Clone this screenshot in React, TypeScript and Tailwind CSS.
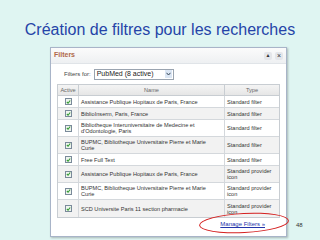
import React from 'react';

const rows = [
    { name: ['Assistance Publique Hopitaux de Paris, France'], type: ['Standard filter'] },
    { name: ['BiblioInserm, Paris, France'], type: ['Standard filter'] },
    { name: ['Bibliotheque Interuniversitaire de Medecine et', "d'Odontologie, Paris"], type: ['Standard filter'] },
    { name: ['BUPMC, Bibliotheque Universitaire Pierre et Marie', 'Curie'], type: ['Standard filter'] },
    { name: ['Free Full Text'], type: ['Standard filter'] },
    { name: ['Assistance Publique Hopitaux de Paris, France'], type: ['Standard provider', 'icon'] },
    { name: ['BUPMC, Bibliotheque Universitaire Pierre et Marie', 'Curie'], type: ['Standard provider', 'icon'] },
    { name: ['SCD Universite Paris 11 section pharmacie'], type: ['Standard provider', 'icon'] },
];

function Check() {
    return (
        <div className="w-[7px] h-[7px] border border-[#7a8a9a] bg-[#eef4ee] flex items-center justify-center">
            <svg width="6" height="6" viewBox="0 0 6 6">
                <path d="M1 3 L2.5 4.5 L5 1.2" stroke="#2f9a2f" strokeWidth="1.3" fill="none" />
            </svg>
        </div>
    );
}

export default function App() {
    return (
        <div className="relative w-[320px] h-[240px] bg-[#dff5f2] overflow-hidden" style={{ fontFamily: '"Liberation Sans", Arial, sans-serif' }}>
            <div className="pt-[21px] h-[47px] text-center text-[16px] leading-[18px] text-[#2544a8]">
                Création de filtres pour les recherches
            </div>
            <div className="ml-[50px] w-[237px] h-[190px] bg-white border border-[#a8b4c8] shadow-[1px_1px_2px_rgba(0,0,0,0.25)] flex flex-col">
                <div className="h-[16px] shrink-0 flex items-center justify-between px-[3px] bg-gradient-to-b from-[#fbfbfb] to-[#eef0f2] border-b border-[#e0e4e8]">
                    <span className="text-[7px] font-bold text-[#b0684a]">Filters</span>
                    <div className="flex gap-[3px]">
                        <div className="w-[8px] h-[8px] rounded-[2px] bg-[#e4e6ea] flex items-center justify-center text-[5px] text-[#333]">▲</div>
                        <div className="w-[8px] h-[8px] rounded-[2px] bg-[#e4e6ea] flex items-center justify-center text-[7px] leading-none text-[#333]">×</div>
                    </div>
                </div>
                <div className="h-[20px] shrink-0 flex items-center pl-[13px] gap-[3px]">
                    <span className="text-[6px] text-[#444]">Filters for:</span>
                    <div className="w-[80px] h-[11px] border border-[#9aa4b0] flex items-center justify-between pl-[2px] pr-[1px]">
                        <span className="text-[7px] text-[#222]">PubMed (8 active)</span>
                        <div className="w-[7px] h-[8px] bg-[#dbe6f4] flex items-center justify-center">
                            <svg width="5" height="4" viewBox="0 0 5 4"><path d="M0.5 0.8 L2.5 3 L4.5 0.8" stroke="#345" strokeWidth="1" fill="none" /></svg>
                        </div>
                    </div>
                </div>
                <div className="mx-[6px] shrink-0 border border-[#c8cdd2] text-[5.6px] leading-[6px] text-[#333]">
                    <div className="h-[11px] flex bg-gradient-to-b from-[#f4f4f4] to-[#e6e6e6] border-b border-[#c8cdd2] text-[#666]">
                        <div className="w-[21px] border-r border-[#c8cdd2] flex items-center justify-center">Active</div>
                        <div className="w-[146px] border-r border-[#c8cdd2] flex items-center justify-center">Name</div>
                        <div className="flex-1 flex items-center justify-center">Type</div>
                    </div>
                    {rows.map((r, i) => {
                        const tall = r.name.length > 1 || r.type.length > 1;
                        return (
                            <div key={i} className={`flex overflow-hidden border-b border-[#d4d8dc] last:border-b-0 ${tall ? 'h-[17px]' : 'h-[12px]'} ${i % 2 === 1 ? 'bg-[#f2f2f2]' : 'bg-white'}`}>
                                <div className="w-[21px] border-r border-[#d4d8dc] flex items-center justify-center"><Check /></div>
                                <div className="w-[146px] border-r border-[#d4d8dc] flex flex-col justify-center pl-[2px]">
                                    {r.name.map((t, j) => <div key={j}>{t}</div>)}
                                </div>
                                <div className="flex-1 flex flex-col justify-center pl-[2px]">
                                    {r.type.map((t, j) => <div key={j}>{t}</div>)}
                                </div>
                            </div>
                        );
                    })}
                </div>
                <div className="flex justify-end pr-[21px] pt-[2px]">
                    <span className="text-[6px] leading-[8px] text-[#2233aa] underline">Manage Filters »</span>
                </div>
            </div>
            <div className="absolute left-[199px] top-[213px] w-[90px] h-[20px] rounded-[50%] border-[1.5px] border-[#d42020] -rotate-3" />
            <div className="absolute left-[296px] top-[221px] text-[6px] text-[#333]">48</div>
        </div>
    );
}
